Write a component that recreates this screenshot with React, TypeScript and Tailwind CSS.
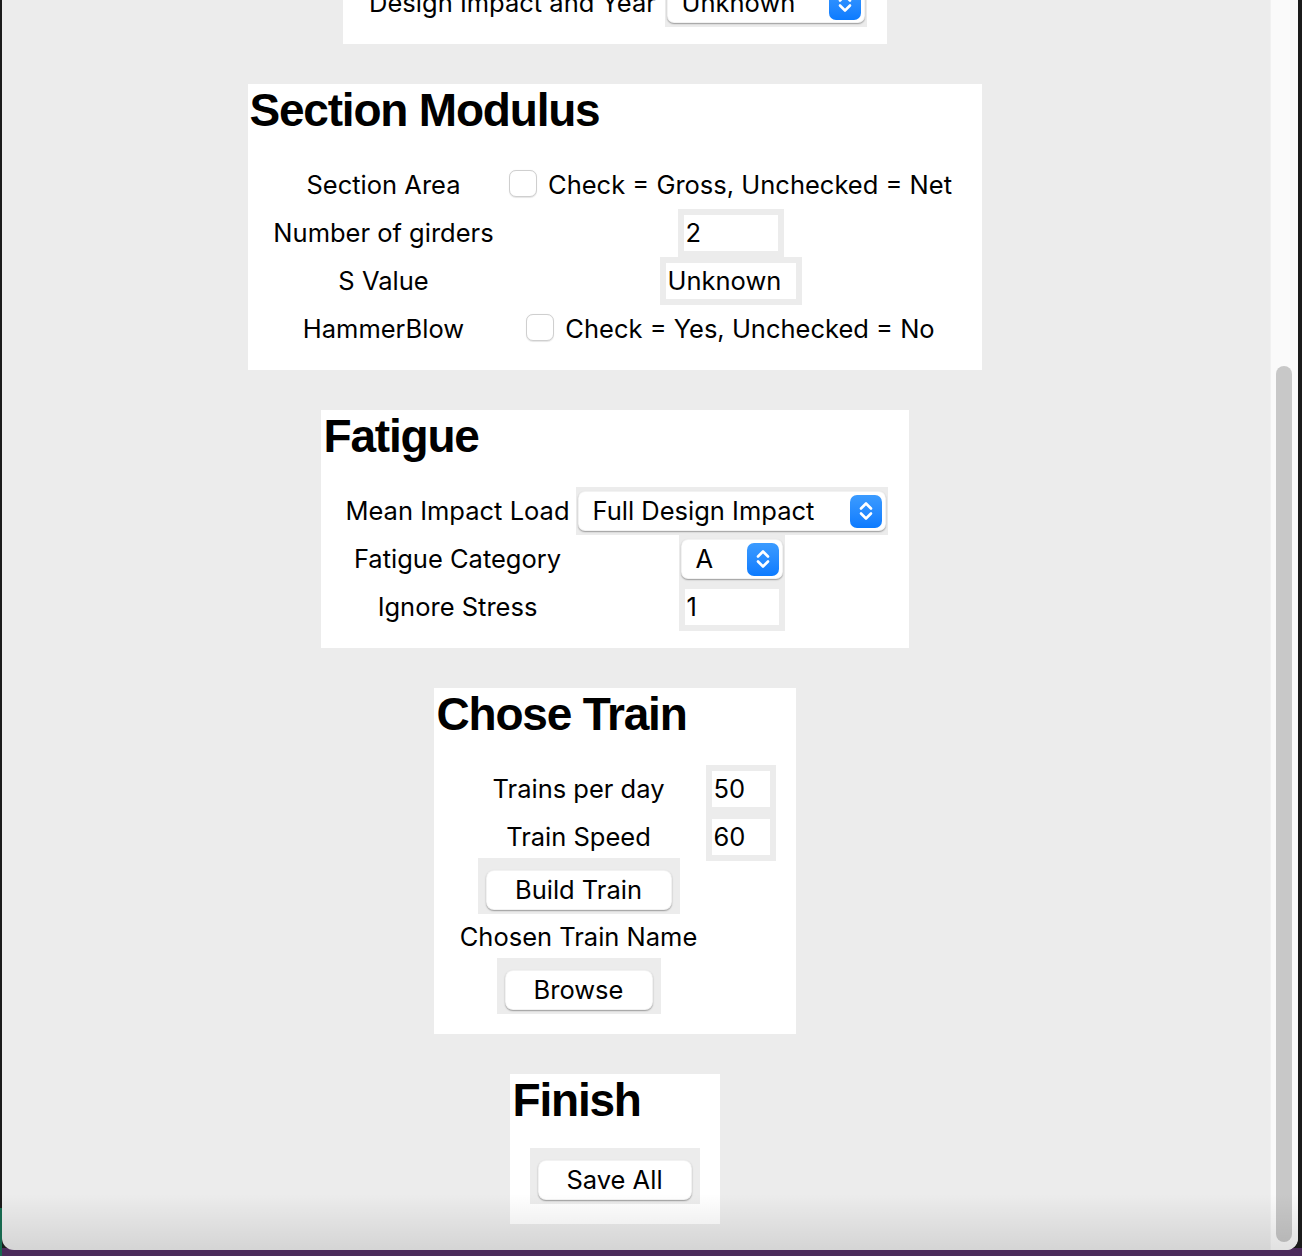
import React from 'react';

// ============================================================================
// Small widgets (macOS Tk look)
// ============================================================================

const BODY = "font-['Inter','Liberation_Sans',sans-serif] text-[25.5px] text-black";
const HEAD = "font-['Liberation_Sans',Arial,sans-serif] font-bold text-[46px] leading-[46px] tracking-[-1.2px] text-black";

function Chevrons() {
  return (
    <svg width="18" height="24" viewBox="0 0 18 24" fill="none">
      <path d="M4 9.5 L9 4.5 L14 9.5" stroke="white" strokeWidth="2.6" strokeLinecap="round" strokeLinejoin="round" />
      <path d="M4 14.5 L9 19.5 L14 14.5" stroke="white" strokeWidth="2.6" strokeLinecap="round" strokeLinejoin="round" />
    </svg>
  );
}

function Select({ value, width }: { value: string; width: string }) {
  return (
    <div className="bg-[#ececec] px-[2px] py-[4px]">
      <div
        className={`${width} h-[40px] flex items-center justify-between bg-white rounded-[7px] pl-[14px] pr-[3px] shadow-[0_1px_1.5px_rgba(0,0,0,0.35)] border border-black/5`}
      >
        <span className="whitespace-nowrap">{value}</span>
        <div className="w-[32px] h-[33px] rounded-[7px] bg-gradient-to-b from-[#3b9bff] to-[#0b7bff] flex items-center justify-center">
          <Chevrons />
        </div>
      </div>
    </div>
  );
}

function Entry({ value, width }: { value: string; width: string }) {
  return (
    <div className="bg-[#ececec] p-[6px]">
      <div className={`${width} h-[36px] bg-white flex items-center pl-[2px] whitespace-nowrap`}>{value}</div>
    </div>
  );
}

function Check({ text }: { text: string }) {
  return (
    <div className="flex items-center gap-[11px] whitespace-nowrap">
      <div className="w-[28px] h-[27px] rounded-[7px] bg-white border border-[#cfcfcf] shadow-[0_0.5px_1px_rgba(0,0,0,0.1)] -mt-[3px]" />
      <span>{text}</span>
    </div>
  );
}

function Button({ label, width }: { label: string; width: string }) {
  return (
    <div className="bg-[#ececec] pt-[12px] pb-[4px] px-[8px]">
      <div
        className={`${width} h-[40px] bg-white rounded-[8px] flex items-center justify-center shadow-[0_1px_1.5px_rgba(0,0,0,0.35)] border border-black/5`}
      >
        {label}
      </div>
    </div>
  );
}

function Row({ c0, c1, w0, w1, h = 'h-[48px]' }: { c0: React.ReactNode; c1?: React.ReactNode; w0: string; w1: string; h?: string }) {
  return (
    <div className={`flex ${h}`}>
      <div className={`${w0} shrink-0 flex items-center justify-center whitespace-nowrap`}>{c0}</div>
      <div className={`${w1} shrink-0 flex items-center justify-center whitespace-nowrap`}>{c1}</div>
    </div>
  );
}

// ============================================================================
// App
// ============================================================================

export default function App() {
  return (
    <div className="relative w-[1302px] h-[1256px] overflow-hidden bg-[#1b1b1b]">
      {/* desktop bits under the window */}
      <div className="absolute left-0 bottom-0 w-full h-[8px] bg-[#4b2a5a]" />
      <div className="absolute left-0 bottom-0 w-[2px] h-[48px] bg-[#17694f]" />

      {/* Window */}
      <div className={`relative ml-[2px] w-[1296px] h-[1250px] bg-[#ececec] rounded-b-[12px] overflow-hidden flex ${BODY}`}>
        {/* Scrollable content */}
        <div className="w-[1268px] shrink-0 flex flex-col items-center gap-[40px] pr-[43px]">
          {/* Design impact (cut off at top) */}
          <div className="w-[544px] bg-white mt-[-21px] pb-[17px]">
            <Row
              w0="w-[340px]"
              w1="w-[166px]"
              c0="Design Impact and Year"
              c1={<Select value="Unknown" width="w-[198px]" />}
            />
          </div>

          {/* Section Modulus */}
          <div className="w-[734px] bg-white pb-[17px]">
            <div className="h-[77px] pt-[3px] pl-[2px]">
              <h1 className={HEAD}>Section Modulus</h1>
            </div>
            <Row w0="w-[272px]" w1="w-[422px]" c0="Section Area" c1={<Check text="Check = Gross, Unchecked = Net" />} />
            <Row w0="w-[272px]" w1="w-[422px]" c0="Number of girders" c1={<Entry value="2" width="w-[94px]" />} />
            <Row w0="w-[272px]" w1="w-[422px]" c0="S Value" c1={<Entry value="Unknown" width="w-[130px]" />} />
            <Row w0="w-[272px]" w1="w-[422px]" c0="HammerBlow" c1={<Check text="Check = Yes, Unchecked = No" />} />
          </div>

          {/* Fatigue */}
          <div className="w-[588px] bg-white pb-[17px]">
            <div className="h-[77px] pt-[3px] pl-[3px]">
              <h1 className={HEAD}>Fatigue</h1>
            </div>
            <Row w0="w-[274px]" w1="w-[274px]" c0="Mean Impact Load" c1={<Select value="Full Design Impact" width="w-[308px]" />} />
            <Row w0="w-[274px]" w1="w-[274px]" c0="Fatigue Category" c1={<Select value="A" width="w-[102px]" />} />
            <Row w0="w-[274px]" w1="w-[274px]" c0="Ignore Stress" c1={<Entry value="1" width="w-[94px]" />} />
          </div>

          {/* Chose Train */}
          <div className="w-[362px] bg-white pb-[20px]">
            <div className="h-[77px] pt-[3px] pl-[3px]">
              <h1 className={HEAD}>Chose Train</h1>
            </div>
            <Row w0="w-[290px]" w1="w-[34px]" c0="Trains per day" c1={<Entry value="50" width="w-[58px]" />} />
            <Row w0="w-[290px]" w1="w-[34px]" c0="Train Speed" c1={<Entry value="60" width="w-[58px]" />} />
            <div className="w-[290px] flex justify-center mt-[-3px]">
              <Button label="Build Train" width="w-[186px]" />
            </div>
            <Row w0="w-[290px]" w1="w-[34px]" h="h-[46px]" c0="Chosen Train Name" />
            <div className="w-[290px] flex justify-center mt-[-2px]">
              <Button label="Browse" width="w-[148px]" />
            </div>
          </div>

          {/* Finish */}
          <div className="w-[210px] bg-white pb-[20px]">
            <div className="h-[74px] pt-[3px] pl-[3px]">
              <h1 className={HEAD}>Finish</h1>
            </div>
            <div className="flex justify-center">
              <Button label="Save All" width="w-[154px]" />
            </div>
          </div>
        </div>

        {/* Scrollbar */}
        <div className="w-[28px] shrink-0 bg-[#fafafa] border-l border-[#f1f1f1] pt-[366px] pb-[8px] pl-[5px] pr-[6px] flex">
          <div className="flex-1 rounded-full bg-[#c8c8c8]" />
        </div>

        {/* bottom shading of the window */}
        <div className="absolute left-0 bottom-0 w-full h-[56px] bg-gradient-to-b from-transparent to-black/10 pointer-events-none" />
      </div>
    </div>
  );
}
